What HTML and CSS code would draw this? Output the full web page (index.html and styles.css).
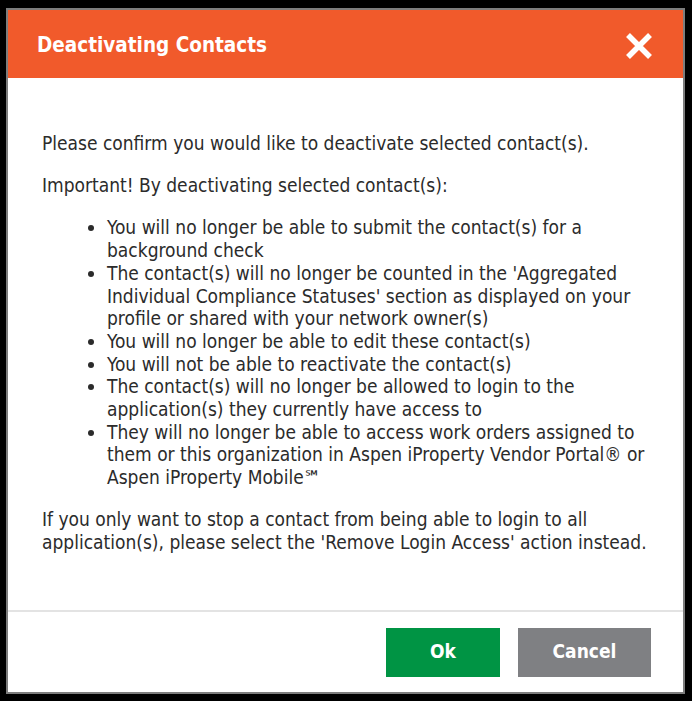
FILE: index.html
```html
<!DOCTYPE html>
<html>
<head>
<meta charset="utf-8">
<link rel="stylesheet" href="styles.css">
</head>
<body>
<div class="dialog">
  <div class="header">
    <span class="title">Deactivating Contacts</span>
    <span class="close" aria-label="Close">
      <svg width="28" height="26" viewBox="0 0 28 26">
        <path d="M3 2 L25 24 M25 2 L3 24" stroke="#fff" stroke-width="5.5" stroke-linecap="butt"/>
      </svg>
    </span>
  </div>
  <div class="content">
    <p>Please confirm you would like to deactivate selected contact(s).</p>
    <p>Important! By deactivating selected contact(s):</p>
    <ul>
      <li>You will no longer be able to submit the contact(s) for a background check</li>
      <li>The contact(s) will no longer be counted in the 'Aggregated Individual Compliance Statuses' section as displayed on your profile or shared with your network owner(s)</li>
      <li>You will no longer be able to edit these contact(s)</li>
      <li>You will not be able to reactivate the contact(s)</li>
      <li>The contact(s) will no longer be allowed to login to the application(s) they currently have access to</li>
      <li>They will no longer be able to access work orders assigned to them or this organization in Aspen iProperty Vendor Portal® or Aspen iProperty Mobile℠</li>
    </ul>
    <p>If you only want to stop a contact from being able to login to all application(s), please select the 'Remove Login Access' action instead.</p>
  </div>
  <div class="footer">
    <button class="btn ok">Ok</button>
    <button class="btn cancel">Cancel</button>
  </div>
</div>
</body>
</html>
```
FILE: styles.css
```css
html, body {
  margin: 0;
  padding: 0;
  background: #000;
}
body {
  padding: 8px 0 0 6px;
  height: 701px;
  box-sizing: border-box;
}
.dialog {
  width: 679px;
  height: 686px;
  box-sizing: border-box;
  border: 2px solid #7d7d7d;
  background: #fff;
  display: flex;
  flex-direction: column;
  font-family: "DejaVu Sans Condensed", "DejaVu Sans", sans-serif;
  color: #2b2b2b;
}
.header {
  height: 68px;
  box-sizing: border-box;
  flex: none;
  background: #f15a2b;
  display: flex;
  align-items: center;
  justify-content: space-between;
  padding: 1px 30px 0 29px;
}
.title {
  color: #fff;
  font-weight: bold;
  font-size: 20.5px;
}
.close {
  display: flex;
  margin-top: 2px;
}
.content {
  flex: 1;
  padding: 54px 30px 0 34px;
  font-size: 19px;
  line-height: 22.7px;
}
.content p {
  margin: 0 0 19.5px 0;
}
.content ul {
  margin: 0 0 19.5px 0;
  padding-left: 65px;
}
.footer {
  flex: none;
  height: 82px;
  box-sizing: border-box;
  border-top: 2px solid #e3e3e3;
  display: flex;
  justify-content: flex-end;
  align-items: center;
  gap: 18px;
  padding: 0 32px 0 0;
}
.btn {
  height: 49px;
  border: none;
  color: #fff;
  font-family: "DejaVu Sans Condensed", "DejaVu Sans", sans-serif;
  font-weight: bold;
  font-size: 19px;
  padding: 0 0 3px 0;
}
.ok {
  width: 114px;
  background: #009444;
}
.cancel {
  width: 133px;
  background: #7f8083;
}
```
